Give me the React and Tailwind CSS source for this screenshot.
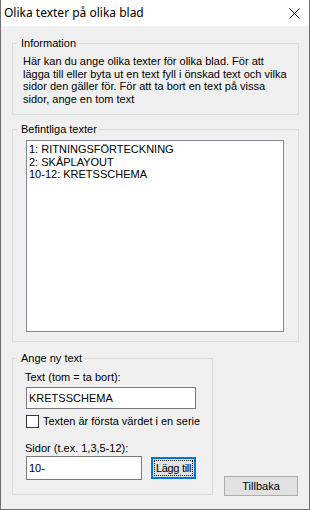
import React from "react";

export default function App() {
  const ui = { fontFamily: '"Liberation Sans", Arial, sans-serif' };
  return (
    <div
      className="w-[310px] h-[510px] bg-[#f0f0f0] border-x border-b border-[#707070] flex flex-col text-[11px] leading-[13px] text-black overflow-hidden"
      style={ui}
    >
      <div className="h-[26px] shrink-0 bg-white flex items-center justify-between pl-[3px] pr-[9px]">
        <span
          className="text-[12px] leading-[16px] text-black"
          style={{ fontFamily: '"Noto Sans", "Open Sans", sans-serif' }}
        >
          Olika texter på olika blad
        </span>
        <svg width="11" height="11" viewBox="0 0 11 11" className="block">
          <path d="M0.5 0.5 L10.5 10.5 M10.5 0.5 L0.5 10.5" stroke="#000" strokeWidth="1" fill="none" />
        </svg>
      </div>

      <div className="pl-[11px] pr-[10px] flex flex-col">
        <fieldset className="mt-[11px] border border-[#dcdcdc] pl-[10px] pt-[5px] pb-[9px]">
          <legend className="ml-[-6px] pl-[4px] pr-[2px] leading-[13px]">Information</legend>
          <div className="leading-[12.5px] whitespace-nowrap">
            <div>Här kan du ange olika texter för olika blad. För att</div>
            <div>lägga till eller byta ut en text fyll i önskad text och vilka</div>
            <div>sidor den gäller för. För att ta bort en text på vissa</div>
            <div>sidor, ange en tom text</div>
          </div>
        </fieldset>

        <fieldset className="mt-[8px] border border-[#dcdcdc] pl-[13px] pt-[4px] pb-[9px]">
          <legend className="ml-[-9px] pl-[4px] pr-[2px] leading-[13px]">Befintliga texter</legend>
          <div className="w-[258px] h-[192px] bg-white border border-[#828790] pl-[2px] pt-[2px] whitespace-nowrap">
            <div className="leading-[12.5px]">1: RITNINGSFÖRTECKNING</div>
            <div className="leading-[12.5px]">2: SKÅPLAYOUT</div>
            <div className="leading-[12.5px]">10-12: KRETSSCHEMA</div>
          </div>
        </fieldset>

        <div className="flex items-end">
          <fieldset className="mt-[10px] w-[201px] border border-[#dcdcdc] pl-[12px] pt-[6px] pb-[14px]">
            <legend className="ml-[-8px] pl-[4px] pr-[2px] leading-[13px]">Ange ny text</legend>
            <div>Text (tom = ta bort):</div>
            <div className="mt-[3px] ml-[1px] w-[170px] h-[22px] bg-white border border-[#7a7a7a] flex items-center pl-[2px]">
              KRETSSCHEMA
            </div>
            <div className="mt-[6px] ml-[1px] flex items-center gap-[4px]">
              <div className="w-[13px] h-[13px] bg-white border border-[#333333]" />
              <span>Texten är första värdet i en serie</span>
            </div>
            <div className="mt-[14px]">Sidor (t.ex. 1,3,5-12):</div>
            <div className="mt-[1px] ml-[1px] flex items-center">
              <div className="w-[116px] h-[24px] bg-white border border-[#7a7a7a] flex items-center pl-[2px]">
                10-
              </div>
              <div className="ml-[9px] w-[45px] h-[22px] bg-[#e1e1e1] border-2 border-[#0078d7] p-[1px] flex">
                <div className="flex-1 border border-dotted border-black flex items-center justify-center whitespace-nowrap tracking-[-0.3px]">
                  Lägg till
                </div>
              </div>
            </div>
          </fieldset>
          <div className="ml-[11px] mb-[-1px] w-[74px] h-[20px] bg-[#e1e1e1] border border-[#adadad] flex items-center justify-center">
            Tillbaka
          </div>
        </div>
      </div>
    </div>
  );
}
